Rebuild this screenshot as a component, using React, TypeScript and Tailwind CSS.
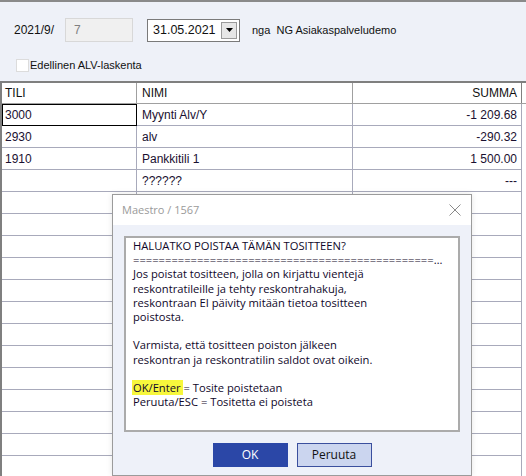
import React from 'react'

const rows = [
  { tili: '3000', nimi: 'Myynti Alv/Y', summa: '-1 209.68', selected: true },
  { tili: '2930', nimi: 'alv', summa: '-290.32' },
  { tili: '1910', nimi: 'Pankkitili 1', summa: '1 500.00' },
  { tili: '', nimi: '??????', summa: '---' },
]

const emptyRows = Array.from({ length: 14 })

function CloseIcon() {
  return (
    <svg width="12" height="12" viewBox="0 0 12 12" fill="none">
      <path d="M0.5 0.5 L11.5 11.5 M11.5 0.5 L0.5 11.5" stroke="#8a8a8a" strokeWidth="1" />
    </svg>
  )
}

function ConfirmDialog() {
  return (
    <div className="absolute left-[112px] top-[194px] w-[360px] h-[282px] border border-[#9b9b9b] bg-[#eef1f9] shadow-[0_0_6px_rgba(0,0,0,0.1)] flex flex-col">
      {/* Title bar */}
      <div className="h-[30px] bg-white flex items-center justify-between pl-[9px] pr-[10px]">
        <span className="text-[11px] text-[#9a9a9a] font-['Open_Sans',sans-serif]">Maestro / 1567</span>
        <CloseIcon />
      </div>

      <div className="px-[11px] pt-[11px]">
        {/* Message box */}
        <div className="w-[336px] h-[196px] border-2 border-[#ababab] bg-white pl-[7px] pr-[10px] pt-[1px] font-['Open_Sans',sans-serif] text-[11.2px] leading-[14.2px] text-[#10082a]">
          <div>HALUATKO POISTAA TÄMÄN TOSITTEEN?</div>
          <div className="whitespace-nowrap">===============================================…</div>
          <div>Jos poistat tositteen, jolla on kirjattu vientejä</div>
          <div>reskontratileille ja tehty reskontrahakuja,</div>
          <div>reskontraan EI päivity mitään tietoa tositteen</div>
          <div>poistosta.</div>
          <div>&nbsp;</div>
          <div>Varmista, että tositteen poiston jälkeen</div>
          <div>reskontran ja reskontratilin saldot ovat oikein.</div>
          <div>&nbsp;</div>
          <div>
            <span className="bg-[#f7f73c] -ml-[1px] pl-[1px]">OK/Enter </span>= Tosite poistetaan
          </div>
          <div>Peruuta/ESC = Tositetta ei poisteta</div>
        </div>

        {/* Buttons */}
        <div className="mt-[11px] flex justify-center gap-[9px] font-['Open_Sans',sans-serif] text-[12px]">
          <button className="w-[75px] h-[24px] bg-[#2b47a7] border border-[#2b47a7] text-white">OK</button>
          <button className="w-[75px] h-[24px] bg-[#cbd5ef] border border-[#3a4f9e] text-[#111]">Peruuta</button>
        </div>
      </div>
    </div>
  )
}

export default function App() {
  return (
    <div className="relative w-[526px] h-[476px] overflow-hidden bg-[#eef1f8] font-['Liberation_Sans',Arial,sans-serif] text-[12px] text-[#111]">
      <div className="h-[2px] bg-[#8a8a8a]" />

      {/* Header form */}
      <div className="pl-[14px] pt-[16px] flex items-center h-[40px]">
        <span className="w-[51px]">2021/9/</span>
        <div className="w-[68px] h-[24px] bg-[#f0f0f0] border border-[#d8d8d8] text-[#808080] pl-[8px] flex items-center">7</div>
        <div className="ml-[14px] w-[93px] h-[23px] bg-white border border-[#7a7a7a] flex items-center">
          <span className="flex-1 pl-[5px] text-[12.5px]">31.05.2021</span>
          <div className="w-[16px] h-[17px] mr-[2px] bg-[#e6e6e6] border border-[#9a9a9a] flex items-center justify-center">
            <svg width="7" height="4" viewBox="0 0 7 4">
              <path d="M0 0 L7 0 L3.5 4 Z" fill="#000" />
            </svg>
          </div>
        </div>
        <span className="ml-[12px] whitespace-pre text-[11px]">nga  NG Asiakaspalveludemo</span>
      </div>

      <div className="pl-[16px] mt-[17px] flex items-center h-[13px]">
        <div className="w-[13px] h-[13px] bg-white border border-[#dcdcdc]" />
        <span className="ml-[1px] text-[11px]">Edellinen ALV-laskenta</span>
      </div>

      {/* Grid */}
      <div className="mt-[9px] border-t-2 border-l-2 border-[#7f7f7f] bg-white">
        <div className="flex h-[21px] border-b border-[#a0a0a0]">
          <div className="w-[135px] border-r border-[#a0a0a0] pl-[3px] flex items-center">TILI</div>
          <div className="w-[216px] border-r border-[#a0a0a0] pl-[5px] flex items-center">NIMI</div>
          <div className="w-[169px] border-r border-[#808080] pr-[4px] flex items-center justify-end">SUMMA</div>
          <div className="flex-1" />
        </div>
        {rows.map((r, i) => (
          <div key={i} className="flex h-[22px]">
            <div
              className={
                r.selected
                  ? 'w-[135px] border border-black pl-[2px] flex items-center text-[#1a1030]'
                  : 'w-[135px] border-r border-b border-[#a8aabb] pl-[3px] flex items-center text-[#1a1030]'
              }
            >
              {r.tili}
            </div>
            <div className="w-[216px] border-r border-b border-[#a8aabb] pl-[5px] flex items-center text-[#1a1030]">{r.nimi}</div>
            <div className="w-[169px] border-r border-b border-[#a8aabb] pr-[4px] flex items-center justify-end text-[#1a1030]">{r.summa}</div>
            <div className="flex-1" />
          </div>
        ))}
        {emptyRows.map((_, i) => (
          <div key={i} className="flex h-[22px]">
            <div className="w-[135px] border-r border-b border-[#a8aabb]" />
            <div className="w-[216px] border-r border-b border-[#a8aabb]" />
            <div className="w-[169px] border-r border-b border-[#a8aabb]" />
            <div className="flex-1" />
          </div>
        ))}
      </div>

      <ConfirmDialog />
    </div>
  )
}
